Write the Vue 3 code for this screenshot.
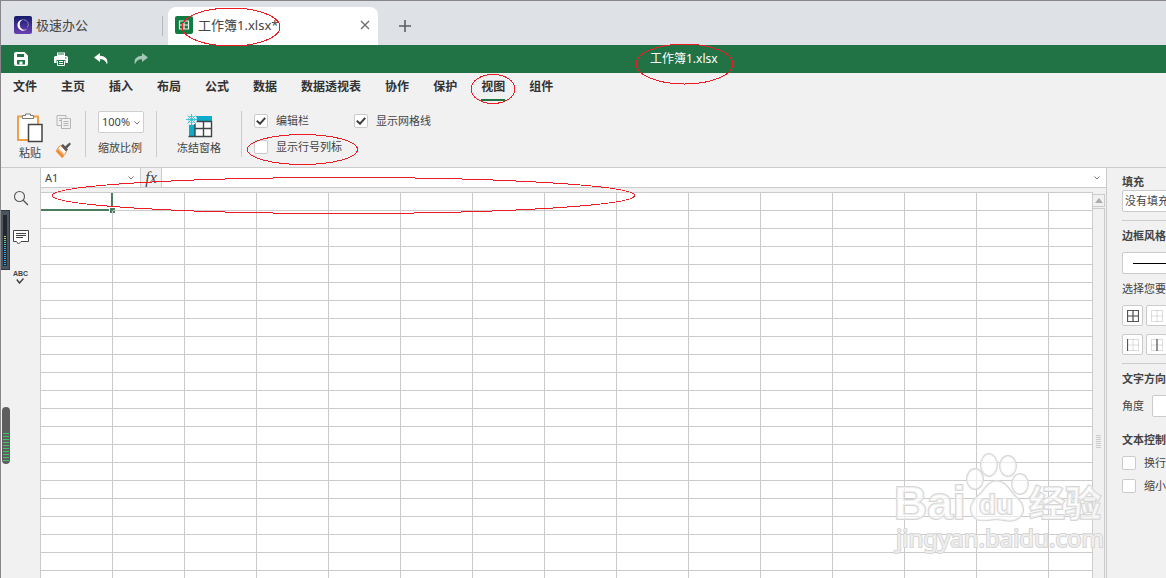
<template>
  <div class="app">
    <header class="tabs">
      <div class="tab home">
        <svg width="18" height="18" viewBox="0 0 18 18">
          <defs>
            <linearGradient id="homeBg" x1="0" y1="0" x2="0" y2="1">
              <stop offset="0" stop-color="#171b6b" />
              <stop offset="1" stop-color="#6a3fb5" />
            </linearGradient>
          </defs>
          <rect width="18" height="18" rx="2" fill="url(#homeBg)" />
          <path d="M9.500 3.500A5.600 5.600 0 1 0 13.500 12.500 4.600 4.600 0 0 1 5.800 9.500 5.400 5.400 0 0 1 9.500 3.500z" fill="#fff" />
          <path d="M9.500 3.700A5 5 0 0 1 13.500 11.500" fill="none" stroke="#8587c4" />
        </svg>
        <span>极速办公</span>
      </div>
      <div class="tab file">
        <svg width="18" height="18" viewBox="0 0 18 18">
          <rect width="18" height="18" rx="2" fill="#107c41" />
          <path d="M4.500 5h9v8h-9zM9 5v8M4.500 9h9" fill="none" stroke="#e4f2ea" stroke-width="1.200" />
        </svg>
        <span>工作簿1.xlsx*</span>
        <button class="close" aria-label="关闭">
          <svg width="10" height="10" viewBox="0 0 10 10"><path d="M1 1l8 8M9 1l-8 8" stroke="#6b6b6b" stroke-width="1.3" /></svg>
        </button>
      </div>
      <button class="add" aria-label="新建">
        <svg width="12" height="12" viewBox="0 0 12 12"><path d="M6 0v12M0 6h12" stroke="#5c5f62" stroke-width="1.6" /></svg>
      </button>
    </header>

    <div class="titlebar">
      <div class="quick">
        <button aria-label="保存">
          <svg width="14" height="14" viewBox="0 0 14 14">
            <path d="M2 0h8.500L14 3.500V12a2 2 0 0 1-2 2H2a2 2 0 0 1-2-2V2a2 2 0 0 1 2-2z" fill="#fff" />
            <path d="M3 2h7v3H3zM3 8h8v4.500H3z" fill="#217346" />
            <path d="M5.500 9.500h3v3h-3z" fill="#fff" />
          </svg>
        </button>
        <button aria-label="打印">
          <svg width="14" height="14" viewBox="0 0 14 14">
            <path d="M3 .5h8V4H3zM0 5.500a1.500 1.500 0 0 1 1.500-1.500h11A1.500 1.500 0 0 1 14 5.500V11h-2.500V8h-9v3H0z" fill="#fff" />
            <path d="M4 2h6M11 6h1.500" stroke="#217346" />
            <path d="M3.500 9v4.500h7V9M5 9.500h4M5 11.500h4" fill="none" stroke="#fff" />
          </svg>
        </button>
        <button aria-label="撤销">
          <svg width="14" height="12" viewBox="0 0 14 12"><path d="M6 0L0 4.500 6 9V6.200C10 6 12 8 13 11.500 14.500 7 12 3 6 2.800z" fill="#fff" /></svg>
        </button>
        <button aria-label="重做">
          <svg width="14" height="12" viewBox="0 0 14 12"><path d="M8 0l6 4.500L8 9V6.200C4 6 2 8 1 11.500-.5 7 2 3 8 2.800z" fill="#a6c7b5" /></svg>
        </button>
      </div>
      <span class="title">工作簿1.xlsx</span>
    </div>

    <nav class="menu">
      <button v-for="m in menus" :key="m" :class="{ active: m === current }" @click="current = m">{{ m }}</button>
    </nav>

    <section class="ribbon">
      <div class="group clipboard">
        <button class="big paste">
          <svg width="28" height="30" viewBox="0 0 28 30">
            <path d="M2 3.500h20V27H2z" fill="#fff" stroke="#f0a04b" stroke-width="2" />
            <path d="M6.500 2.500h3V1h5v1.500h3v3h-11z" fill="#fff" stroke="#777" />
            <path d="M12.500 11.500h13.500v17H12.500z" fill="#fff" stroke="#444" stroke-width="1.500" />
          </svg>
          <span>粘贴</span>
        </button>
        <div class="small">
          <button aria-label="复制">
            <svg width="16" height="16" viewBox="0 0 16 16">
              <path d="M1 1.500h9v10H1z" fill="#f1f1f1" stroke="#b5b5b5" />
              <path d="M5.500 4.500h9v10h-9z" fill="#f1f1f1" stroke="#b5b5b5" />
              <path d="M7.500 7.500h5M7.500 9.500h5M7.500 11.500h5M3 4.500h2M3 6.500h2" stroke="#b5b5b5" />
            </svg>
          </button>
          <button aria-label="格式刷">
            <svg width="16" height="16" viewBox="0 0 16 16">
              <path d="M1 6.500L8.500 14 6 16 0 9.500z" fill="#f28b33" />
              <path d="M1.500 6L4.500 3.500 10.500 9.500 8.500 13z" fill="#fff" stroke="#f28b33" />
              <path d="M5 3.500l2-1.500 5 5.500-2 2zM9 4.500L13.500.5l1.500 1.500L11 6.500z" fill="#5b5b5b" />
            </svg>
          </button>
        </div>
      </div>
      <div class="group zoom">
        <div class="select">
          <select id="zoom" v-model="zoom">
            <option>100%</option>
          </select>
          <svg class="arrow" width="6" height="4" viewBox="0 0 6 4"><path d="M.5 .5L3 3 5.500 .5" fill="none" stroke="#777" /></svg>
        </div>
        <label for="zoom">缩放比例</label>
      </div>
      <div class="group freeze">
        <button class="big">
          <svg width="27" height="25" viewBox="0 0 27 25">
            <path d="M2 2h24v6H2zM3 8h6v14H3z" fill="#0eaccb" />
            <path d="M9 8h16.500v14H9z" fill="#fff" />
            <path d="M2.500 22.500h23V7.500H9v15M17.500 7.500v15M9 14.500h16.500" fill="none" stroke="#3f4448" stroke-width="1.400" />
            <circle cx="5.500" cy="5.500" r="5.500" fill="#f1f1f1" />
            <circle cx="5.500" cy="5.500" r="3.200" fill="none" stroke="#31bfd8" stroke-dasharray="2 1" />
            <path d="M5.500 0v11M0 5.500h11M1.500 1.500l8 8M9.500 1.500l-8 8" stroke="#31bfd8" stroke-width=".9" />
          </svg>
          <span>冻结窗格</span>
        </button>
      </div>
      <div class="group checks">
        <label v-for="o in options" :key="o.label" class="check">
          <input v-model="o.on" type="checkbox" />
          <svg v-if="o.on" class="tick" width="10" height="8" viewBox="0 0 10 8"><path d="M.8 3.800L4 6.700 9.300 .8" fill="none" stroke="#3c3c3c" stroke-width="2" /></svg>
          <span>{{ o.label }}</span>
        </label>
      </div>
    </section>

    <main class="work">
      <aside class="side">
        <button aria-label="搜索">
          <svg width="16" height="16" viewBox="0 0 16 16"><circle cx="6.500" cy="6.500" r="5" fill="none" stroke="#555" stroke-width="1.100" /><path d="M10.200 10.200L15 15" stroke="#555" stroke-width="1.300" /></svg>
        </button>
        <button aria-label="批注">
          <svg width="16" height="16" viewBox="0 0 16 16"><path d="M.5 1.500h15v11H8l-2.500 2.500L3.500 12.500h-3z" fill="#fff" stroke="#444" /><path d="M3 4.500h10M3 6.500h10M3 8.500h7" stroke="#444" /></svg>
        </button>
        <button aria-label="拼写检查" class="spell">
          <span>ABC</span>
          <svg width="8" height="6" viewBox="0 0 8 6"><path d="M.8 1.500L3.500 5 7.500 .5" fill="none" stroke="#444" stroke-width="1.500" /></svg>
        </button>
      </aside>

      <div class="editor">
        <div class="formula">
          <input v-model="cell" class="name" aria-label="名称框" />
          <button class="drop" aria-label="名称列表">
            <svg width="6" height="4" viewBox="0 0 6 4"><path d="M.5 .5L3 3 5.500 .5" fill="none" stroke="#777" /></svg>
          </button>
          <button class="fx"><i>fx</i></button>
          <input v-model="formula" class="expr" aria-label="编辑栏" />
          <button class="drop" aria-label="展开">
            <svg width="6" height="4" viewBox="0 0 6 4"><path d="M.5 .5L3 3 5.500 .5" fill="none" stroke="#777" /></svg>
          </button>
        </div>
        <div class="sheet">
          <div class="cells">
            <table>
              <tbody>
                <tr v-for="r in 60" :key="r">
                  <td v-for="c in 30" :key="c" :class="{ selected: r === 1 && c === 1 }"></td>
                </tr>
              </tbody>
            </table>
          </div>
          <div class="scroll">
            <button class="up" aria-label="向上滚动">
              <svg width="8" height="5" viewBox="0 0 8 5"><path d="M4 0l4 5H0z" fill="#adadad" /></svg>
            </button>
            <div class="thumb"><div class="grip"></div></div>
          </div>
        </div>
      </div>

      <aside class="panel">
        <section>
          <label class="head" for="fill">填充</label>
          <select id="fill" class="field"><option>没有填充</option></select>
        </section>
        <section class="border">
          <h3 class="head">边框风格</h3>
          <button class="field line" aria-label="线条"><span></span></button>
          <p>选择您要</p>
          <div class="buttons">
            <button v-for="b in borders" :key="b.name" :aria-label="b.name">
              <svg width="12" height="12" viewBox="0 0 12 12">
                <path d="M.5 .5h11v11H.5zM6 .5v11M.5 6h11" fill="none" stroke="#bbb" stroke-dasharray="1 1" />
                <path :d="b.d" fill="none" stroke="#555" stroke-width="1.200" />
              </svg>
            </button>
          </div>
        </section>
        <section class="text">
          <h3 class="head">文字方向</h3>
          <div class="angle">
            <label for="angle">角度</label>
            <input id="angle" class="field" />
          </div>
          <h3 class="head">文本控制</h3>
          <label class="check"><input type="checkbox" /><span>换行</span></label>
          <label class="check"><input type="checkbox" /><span>缩小</span></label>
        </section>
      </aside>
    </main>

    <div class="meter dark"><span></span></div>
    <div class="meter round"><span></span></div>

    <svg class="marks">
      <ellipse cx="231" cy="27" rx="49" ry="19" />
      <ellipse cx="684.500" cy="64" rx="48.500" ry="20" />
      <ellipse cx="493" cy="89" rx="22" ry="14.500" />
      <ellipse cx="302.500" cy="149.500" rx="55" ry="15" />
      <ellipse cx="343.500" cy="195.500" rx="291" ry="18" />
    </svg>

    <svg class="watermark" width="220" height="104" viewBox="0 0 220 104">
      <g class="shape">
        <ellipse cx="85" cy="29" rx="8" ry="10" />
        <ellipse cx="99" cy="15" rx="8" ry="11" />
        <ellipse cx="118" cy="16" rx="8" ry="10" />
        <ellipse cx="130" cy="34" rx="8" ry="10" />
        <path d="M106 31c-8 0-11 9-17 14-6 5-9 10-8 16 2 10 10 10 17 9 6-1 10-1 16 0 8 2 17 0 19-9 1-7-4-11-9-16-5-6-9-14-18-14z" />
      </g>
      <text class="bai" x="4" y="69">Bai</text>
      <text class="du" x="89" y="64">du</text>
      <text class="cn" x="139" y="67">经验</text>
      <text class="url" x="6" y="97">jingyan.baidu.com</text>
    </svg>
  </div>
</template>

<script setup>
import { ref } from 'vue'

const menus = ['文件', '主页', '插入', '布局', '公式', '数据', '数据透视表', '协作', '保护', '视图', '组件']
const current = ref('视图')
const zoom = ref('100%')
const cell = ref('A1')
const formula = ref('')

const options = ref([
  { label: '编辑栏', on: true },
  { label: '显示网格线', on: true },
  { label: '显示行号列标', on: false }
])

const borders = [
  { name: '所有框线', d: 'M.5 .5h11v11H.5zM6 .5v11M.5 6h11' },
  { name: '无框线', d: '' },
  { name: '左框线', d: 'M.5 0v12' },
  { name: '内部竖线', d: 'M6 0v12' }
]
</script>

<style>
body {
  margin: 0;
}
</style>

<style scoped>
* {
  box-sizing: border-box;
}

.app {
  position: relative;
  display: flex;
  flex-direction: column;
  height: 100vh;
  overflow: hidden;
  border-top: 1px solid #88868a;
  border-left: 1px solid #88868a;
  background: #f1f1f1;
  color: #444;
  font: 11px/16px "Noto Sans", "Noto Sans CJK SC", sans-serif;
}

button {
  display: flex;
  align-items: center;
  justify-content: center;
  padding: 0;
  border: none;
  background: transparent;
  color: inherit;
  font: inherit;
}

input,
select {
  margin: 0;
  border: none;
  border-radius: 0;
  outline: none;
  background: #fff;
  color: inherit;
  font: inherit;
  appearance: none;
}

svg {
  display: block;
  flex: none;
}

/* window tabs */
.tabs {
  display: flex;
  align-items: flex-end;
  flex: none;
  height: 44px;
  background: #dee1e6;
}

.tab {
  display: flex;
  align-items: center;
  height: 38px;
  padding-bottom: 2px;
  font-size: 13px;
}

.home {
  position: relative;
  width: 167px;
  padding-left: 13px;
  gap: 4px;
}

.home::after {
  content: '';
  position: absolute;
  right: 5px;
  top: 9px;
  width: 1px;
  height: 20px;
  background: #b5b8bd;
}

.file {
  width: 210px;
  padding-left: 7px;
  padding-right: 8px;
  gap: 5px;
  border-radius: 8px 8px 0 0;
  background: #fff;
}

.close {
  margin-left: auto;
}

.add {
  width: 54px;
  height: 38px;
}

.titlebar {
  position: relative;
  display: flex;
  flex: none;
  height: 28px;
  background: #217346;
  color: #fff;
}

.quick {
  display: flex;
}

.quick button {
  width: 40px;
}

.title {
  position: absolute;
  left: 649px;
  top: 6px;
  font-size: 12px;
}

.menu {
  display: flex;
  flex: none;
  gap: 24px;
  height: 30px;
  padding: 0 12px;
  color: #333;
  font-size: 12px;
  font-weight: bold;
}

.menu button {
  height: 28px;
  padding-top: 2px;
  border-bottom: 2px solid transparent;
}

.menu .active {
  border-color: #217346;
}

/* ribbon */
.ribbon {
  display: flex;
  flex: none;
  height: 65px;
  padding: 8px 0 10px;
  border-bottom: 1px solid #cbcbcb;
}

.group {
  display: flex;
  height: 46px;
  border-right: 1px solid #cbcbcb;
}

.clipboard {
  width: 85px;
  padding-left: 15px;
  gap: 12px;
}

.big {
  flex-direction: column;
  justify-content: flex-start;
  height: 48px;
}

.big svg {
  margin-top: 3px;
}

.paste svg {
  margin-top: 2px;
}

.paste span {
  margin-top: 2px;
}

.small {
  display: flex;
  flex-direction: column;
  gap: 12px;
  padding-top: 3px;
}

.zoom {
  flex-direction: column;
  padding: 0 12px;
  gap: 7px;
}

.select {
  position: relative;
}

.select select {
  width: 46px;
  height: 22px;
  padding-left: 3px;
  border: 1px solid #cfcfcf;
  border-radius: 2px;
}

.arrow {
  position: absolute;
  right: 4px;
  top: 10px;
}

.freeze {
  padding: 0 20px;
}

.freeze span {
  margin-top: 1px;
}

.checks {
  display: grid;
  grid-template-columns: 100px 100px;
  grid-template-rows: 20px 20px;
  row-gap: 6px;
  padding-left: 12px;
  border: none;
}

.check {
  position: relative;
  display: flex;
  align-items: center;
  gap: 8px;
  white-space: nowrap;
}

.check input {
  flex: none;
  width: 14px;
  height: 14px;
  border: 1px solid #cbcbcb;
  border-radius: 2px;
}

.tick {
  position: absolute;
  left: 2px;
  top: 6px;
}

/* work area */
.work {
  display: flex;
  flex: 1;
  min-height: 0;
}

.side {
  display: flex;
  flex-direction: column;
  align-items: center;
  flex: none;
  gap: 23px;
  width: 40px;
  padding-top: 22px;
  border-right: 1px solid #cbcbcb;
}

.spell {
  flex-direction: column;
  padding-top: 2px;
  font: bold 7px/8px "Liberation Sans", sans-serif;
}

.editor {
  display: flex;
  flex-direction: column;
  flex: 1;
  min-width: 0;
  border-right: 1px solid #cbcbcb;
}

.formula {
  display: flex;
  flex: none;
  height: 20px;
  border-bottom: 1px solid #cbcbcb;
  background: #fff;
}

.name {
  width: 80px;
  padding: 0 4px;
}

.drop {
  width: 18px;
}

.name + .drop {
  width: 19px;
}

.fx {
  width: 22px;
  border: solid #cbcbcb;
  border-width: 0 1px;
  background: #f1f1f1;
  font: 16px/16px "Liberation Serif", serif;
}

.expr {
  flex: 1;
  min-width: 0;
}

.sheet {
  display: flex;
  flex: 1;
  min-height: 0;
  margin-top: 4px;
  padding-right: 1px;
}

.cells {
  flex: 1;
  min-width: 0;
  overflow: hidden;
  border-top: 1px solid #cbcbcb;
  background: #fff;
}

table {
  width: 2160px;
  table-layout: fixed;
  border-spacing: 0;
}

td {
  position: relative;
  height: 18px;
  padding: 0;
  border: solid #cbcbcb;
  border-width: 0 1px 1px 0;
}

/* selection frame straddles the cell's right and bottom lines */
.selected::before {
  content: '';
  position: absolute;
  inset: 0 -1px -1px 0;
  border: solid #4a7c5f;
  border-width: 0 2px 2px 0;
}

.selected::after {
  content: '';
  position: absolute;
  right: -4px;
  bottom: -4px;
  width: 5px;
  height: 5px;
  border: 1px solid #fff;
  background: #4a7c5f;
  box-sizing: content-box;
}

.scroll {
  display: flex;
  flex-direction: column;
  flex: none;
  gap: 1px;
  width: 13px;
  padding-top: 2px;
  border-left: 1px solid #cbcbcb;
}

.up {
  height: 13px;
  border: 1px solid #cbcbcb;
  border-left: none;
}

.thumb {
  flex: 1;
  padding: 226px 3px 0;
  border: 1px solid #cbcbcb;
  border-width: 1px 1px 0 0;
}

.grip {
  height: 13px;
  background: repeating-linear-gradient(#cbcbcb 0 1px, transparent 1px 2px);
}

/* settings panel */
.panel {
  flex: none;
  width: 59px;
  padding: 6px 0 0 15px;
  overflow: hidden;
  white-space: nowrap;
}

.panel section {
  width: 180px;
  padding-bottom: 8px;
}

.panel section + section {
  padding-top: 7px;
  border-top: 1px solid #cbcbcb;
}

.head {
  display: block;
  margin: 0;
  font-size: 11px;
  font-weight: bold;
}

.field {
  display: block;
  width: 180px;
  height: 22px;
  padding: 0 2px;
  border: 1px solid #cbcbcb;
  border-radius: 2px;
  background: #fff;
}

.line {
  margin: 8px 0 7px;
  padding: 0 10px;
}

.line span {
  display: block;
  width: 100%;
  height: 1px;
  background: #000;
}

.panel p {
  margin: 0 0 8px;
}

.buttons {
  display: grid;
  grid-template-columns: 21px 21px;
  gap: 8px 3px;
}

.buttons button {
  height: 21px;
  border: 1px solid #cbcbcb;
  border-radius: 2px;
  background: #fff;
}

.angle {
  display: flex;
  align-items: center;
  gap: 8px;
  margin: 8px 0 15px;
}

.text .check {
  margin-top: 7px;
}

/* level meters floating over the left edge */
.meter {
  position: absolute;
  left: 0;
}

.dark {
  top: 209px;
  width: 9px;
  height: 60px;
  padding: 4px 2px;
  border: 1px solid #33353d;
  border-left: none;
  background: #4a5560;
}

.dark span {
  display: block;
  width: 4px;
  height: 51px;
  border: 1px solid #25272e;
  background:
    repeating-linear-gradient(transparent 0 1px, #25272e 1px 2px),
    linear-gradient(#25272e 0 20px, #b5cc4a 20px 24px, #5fc69a 24px 30px, #38a8e8 30px);
}

.round {
  left: 1px;
  top: 406px;
  width: 8px;
  height: 57px;
  padding: 26px 1px 2px;
  border-radius: 4px;
  background: #5e5e5e;
}

.round span {
  display: block;
  height: 29px;
  background: repeating-linear-gradient(#45c46c 0 1px, transparent 1px 3px);
}

.marks {
  position: absolute;
  left: -1px;
  top: -1px;
  width: 100%;
  height: 100%;
  fill: none;
  stroke: #ed1c24;
  pointer-events: none;
  shape-rendering: crispEdges;
}

.watermark {
  position: absolute;
  right: 56px;
  bottom: 24px;
  fill: rgba(255, 255, 255, 0.6);
  stroke: #d6d6d6;
  stroke-width: 2;
  paint-order: stroke;
  pointer-events: none;
}

.bai,
.du {
  font: bold 46px "Liberation Sans", sans-serif;
}

.du {
  font-size: 28px;
}

.cn {
  font: bold 36px "Noto Sans CJK SC", sans-serif;
}

.url {
  font: 24px "Noto Sans", sans-serif;
}
</style>
